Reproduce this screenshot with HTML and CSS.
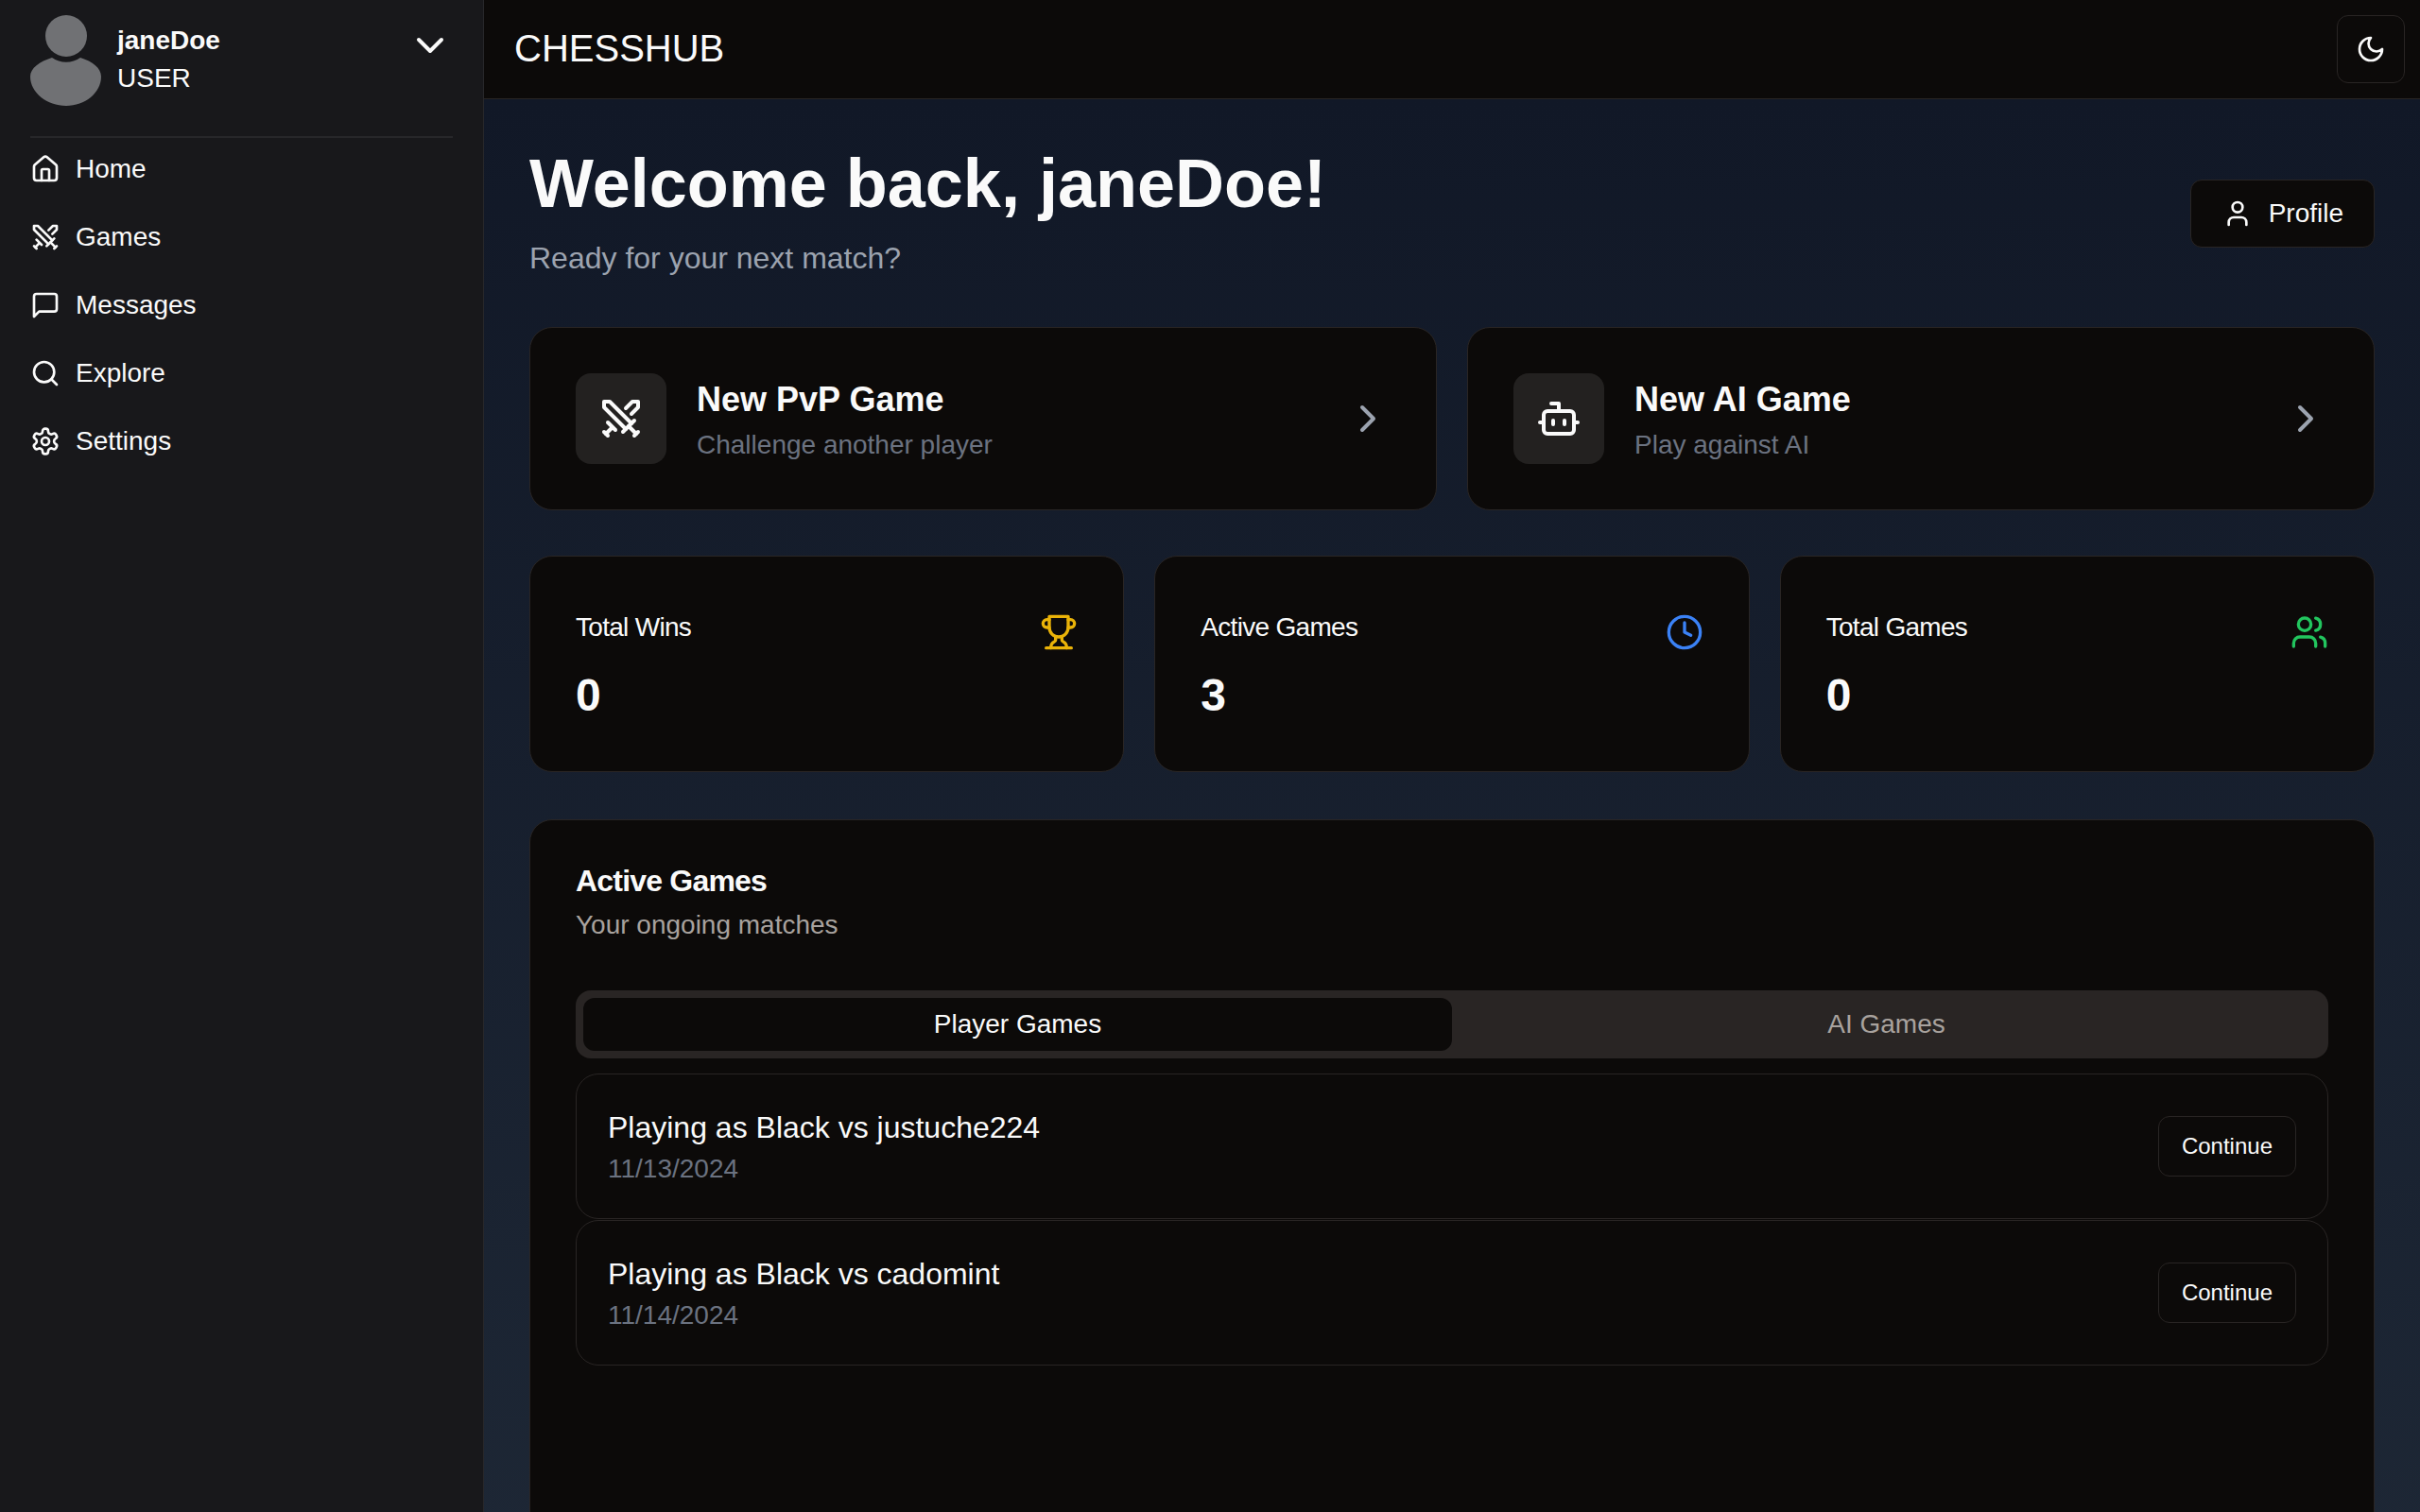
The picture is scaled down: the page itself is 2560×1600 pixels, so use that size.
FILE: index.html
```html
<!doctype html>
<html>
<head>
  <meta charset="utf-8">
  <title>ChessHub</title>
  <link rel="stylesheet" href="styles.css">
</head>
<body>
  <svg class="icon-defs" xmlns="http://www.w3.org/2000/svg">
    <symbol id="i-home" viewBox="0 0 24 24"><path d="M15 21v-8a1 1 0 0 0-1-1h-4a1 1 0 0 0-1 1v8"/><path d="M3 10a2 2 0 0 1 .709-1.528l7-5.999a2 2 0 0 1 2.582 0l7 5.999A2 2 0 0 1 21 10v9a2 2 0 0 1-2 2H5a2 2 0 0 1-2-2z"/></symbol>
    <symbol id="i-swords" viewBox="0 0 24 24"><polyline points="14.5 17.5 3 6 3 3 6 3 17.5 14.5"/><line x1="13" x2="19" y1="19" y2="13"/><line x1="16" x2="20" y1="16" y2="20"/><line x1="19" x2="21" y1="21" y2="19"/><polyline points="14.5 6.5 18 3 21 3 21 6 17.5 9.5"/><line x1="5" x2="9" y1="14" y2="18"/><line x1="7" x2="4" y1="17" y2="20"/><line x1="3" x2="5" y1="19" y2="21"/></symbol>
    <symbol id="i-message" viewBox="0 0 24 24"><path d="M21 15a2 2 0 0 1-2 2H7l-4 4V5a2 2 0 0 1 2-2h14a2 2 0 0 1 2 2z"/></symbol>
    <symbol id="i-search" viewBox="0 0 24 24"><circle cx="11" cy="11" r="8"/><path d="m21 21-4.3-4.3"/></symbol>
    <symbol id="i-settings" viewBox="0 0 24 24"><path d="M12.22 2h-.44a2 2 0 0 0-2 2v.18a2 2 0 0 1-1 1.73l-.43.25a2 2 0 0 1-2 0l-.15-.08a2 2 0 0 0-2.73.73l-.22.38a2 2 0 0 0 .73 2.73l.15.1a2 2 0 0 1 1 1.72v.51a2 2 0 0 1-1 1.74l-.15.09a2 2 0 0 0-.73 2.73l.22.38a2 2 0 0 0 2.73.73l.15-.08a2 2 0 0 1 2 0l.43.25a2 2 0 0 1 1 1.73V20a2 2 0 0 0 2 2h.44a2 2 0 0 0 2-2v-.18a2 2 0 0 1 1-1.73l.43-.25a2 2 0 0 1 2 0l.15.08a2 2 0 0 0 2.73-.73l.22-.39a2 2 0 0 0-.73-2.73l-.15-.08a2 2 0 0 1-1-1.74v-.5a2 2 0 0 1 1-1.74l.15-.09a2 2 0 0 0 .73-2.73l-.22-.38a2 2 0 0 0-2.73-.73l-.15.08a2 2 0 0 1-2 0l-.43-.25a2 2 0 0 1-1-1.73V4a2 2 0 0 0-2-2z"/><circle cx="12" cy="12" r="3"/></symbol>
    <symbol id="i-moon" viewBox="0 0 24 24"><path d="M12 3a6 6 0 0 0 9 9 9 9 0 1 1-9-9Z"/></symbol>
    <symbol id="i-user" viewBox="0 0 24 24"><path d="M19 21v-2a4 4 0 0 0-4-4H9a4 4 0 0 0-4 4v2"/><circle cx="12" cy="7" r="4"/></symbol>
    <symbol id="i-bot" viewBox="0 0 24 24"><path d="M12 8V4H8"/><rect width="16" height="12" x="4" y="8" rx="2"/><path d="M2 14h2"/><path d="M20 14h2"/><path d="M15 13v2"/><path d="M9 13v2"/></symbol>
    <symbol id="i-trophy" viewBox="0 0 24 24"><path d="M6 9H4.5a2.5 2.5 0 0 1 0-5H6"/><path d="M18 9h1.5a2.5 2.5 0 0 0 0-5H18"/><path d="M4 22h16"/><path d="M10 14.66V17c0 .55-.47.98-.97 1.21C7.85 18.75 7 20.24 7 22"/><path d="M14 14.66V17c0 .55.47.98.97 1.21C16.15 18.75 17 20.24 17 22"/><path d="M18 2H6v7a6 6 0 0 0 12 0V2Z"/></symbol>
    <symbol id="i-clock" viewBox="0 0 24 24"><circle cx="12" cy="12" r="10"/><polyline points="12 6 12 12 16 14"/></symbol>
    <symbol id="i-users" viewBox="0 0 24 24"><path d="M16 21v-2a4 4 0 0 0-4-4H6a4 4 0 0 0-4 4v2"/><circle cx="9" cy="7" r="4"/><path d="M22 21v-2a4 4 0 0 0-3-3.87"/><path d="M16 3.13a4 4 0 0 1 0 7.75"/></symbol>
    <symbol id="i-chevron-right" viewBox="0 0 24 24"><path d="m9 18 6-6-6-6"/></symbol>
    <symbol id="i-chevron-down" viewBox="0 0 24 24"><path d="m6 9 6 6 6-6"/></symbol>
  </svg>

  <div class="app">
    <aside class="sidebar">
      <div class="user-row">
        <svg class="avatar" viewBox="0 0 76 96">
          <circle cx="38" cy="22" r="22"/>
          <path d="M23 45 A26 26 0 0 0 53 45 C66 49 75 56 75 65 C75 82 58 96 38 96 C18 96 0 82 0 65 C0 56 10 49 23 45 Z"/>
        </svg>
        <div class="user-text">
          <div class="user-name">janeDoe</div>
          <div class="user-role">USER</div>
        </div>
        <svg class="icon icon-lg user-toggle"><use href="#i-chevron-down"/></svg>
      </div>
      <div class="divider"></div>
      <nav class="nav">
        <a class="nav-item"><svg class="icon"><use href="#i-home"/></svg>Home</a>
        <a class="nav-item"><svg class="icon"><use href="#i-swords"/></svg>Games</a>
        <a class="nav-item"><svg class="icon"><use href="#i-message"/></svg>Messages</a>
        <a class="nav-item"><svg class="icon"><use href="#i-search"/></svg>Explore</a>
        <a class="nav-item"><svg class="icon"><use href="#i-settings"/></svg>Settings</a>
      </nav>
    </aside>

    <div class="main">
      <header class="topbar">
        <div class="brand">CHESSHUB</div>
        <button class="theme-btn"><svg class="icon"><use href="#i-moon"/></svg></button>
      </header>

      <main class="content">
        <section class="welcome">
          <div>
            <h1 class="welcome-title">Welcome back, janeDoe!</h1>
            <p class="welcome-sub">Ready for your next match?</p>
          </div>
          <button class="profile-btn"><svg class="icon"><use href="#i-user"/></svg>Profile</button>
        </section>

        <section class="actions">
          <div class="card action-card">
            <div class="action-icon"><svg class="icon icon-lg"><use href="#i-swords"/></svg></div>
            <div class="action-text">
              <div class="action-title">New PvP Game</div>
              <div class="action-sub">Challenge another player</div>
            </div>
            <svg class="icon icon-lg action-arrow"><use href="#i-chevron-right"/></svg>
          </div>
          <div class="card action-card">
            <div class="action-icon"><svg class="icon icon-lg"><use href="#i-bot"/></svg></div>
            <div class="action-text">
              <div class="action-title">New AI Game</div>
              <div class="action-sub">Play against AI</div>
            </div>
            <svg class="icon icon-lg action-arrow"><use href="#i-chevron-right"/></svg>
          </div>
        </section>

        <section class="stats">
          <div class="card stat-card">
            <div class="stat-head">
              <div class="stat-label">Total Wins</div>
              <svg class="icon icon-md yellow"><use href="#i-trophy"/></svg>
            </div>
            <div class="stat-value">0</div>
          </div>
          <div class="card stat-card">
            <div class="stat-head">
              <div class="stat-label">Active Games</div>
              <svg class="icon icon-md blue"><use href="#i-clock"/></svg>
            </div>
            <div class="stat-value">3</div>
          </div>
          <div class="card stat-card">
            <div class="stat-head">
              <div class="stat-label">Total Games</div>
              <svg class="icon icon-md green"><use href="#i-users"/></svg>
            </div>
            <div class="stat-value">0</div>
          </div>
        </section>

        <section class="card games-panel">
          <h2 class="games-title">Active Games</h2>
          <p class="games-sub">Your ongoing matches</p>
          <div class="tabs">
            <div class="tab tab-active">Player Games</div>
            <div class="tab">AI Games</div>
          </div>
          <div class="game-row">
            <div>
              <div class="game-name">Playing as Black vs justuche224</div>
              <div class="game-date">11/13/2024</div>
            </div>
            <button class="continue-btn">Continue</button>
          </div>
          <div class="game-row">
            <div>
              <div class="game-name">Playing as Black vs cadomint</div>
              <div class="game-date">11/14/2024</div>
            </div>
            <button class="continue-btn">Continue</button>
          </div>
        </section>
      </main>
    </div>
  </div>
</body>
</html>
```

FILE: styles.css
```css
html, body {
  width: 100%;
  height: 100%;
  margin: 0;
  padding: 0;
  overflow: hidden;
  background: #0c0a09;
  color: #fafafa;
  font-family: "Liberation Sans", Arial, sans-serif;
}
h1, h2, p {
  margin: 0;
}
button {
  font-family: inherit;
  color: #fafafa;
  background: #0c0a09;
  border: 1px solid #292524;
}

.icon-defs {
  display: none;
}
.icon {
  flex: none;
  width: 32px;
  height: 32px;
  fill: none;
  stroke: currentColor;
  stroke-width: 2;
  stroke-linecap: round;
  stroke-linejoin: round;
}
.icon-md {
  width: 40px;
  height: 40px;
}
.icon-lg {
  width: 48px;
  height: 48px;
}
.yellow { color: #eab308; }
.blue { color: #3b82f6; }
.green { color: #22c55e; }

.app {
  display: flex;
  height: 100%;
}

/* sidebar */
.sidebar {
  flex: none;
  width: 512px;
  box-sizing: border-box;
  height: 100%;
  padding: 16px 32px 0;
  border-right: 1px solid #27272a;
  background: #18181b;
}
.user-row {
  display: flex;
  align-items: flex-start;
}
.avatar {
  flex: none;
  width: 76px;
  height: 96px;
  fill: #707174;
}
.user-text {
  flex: 1;
  margin: 7px 0 0 16px;
  font-size: 28px;
  line-height: 40px;
}
.user-name {
  font-weight: bold;
}
.user-toggle {
  margin-top: 8px;
}
.divider {
  height: 2px;
  margin-top: 32px;
  background: #27272a;
}
.nav {
  display: flex;
  flex-direction: column;
  gap: 8px;
  margin-top: 1px;
}
.nav-item {
  display: flex;
  align-items: center;
  gap: 16px;
  height: 64px;
  font-size: 28px;
}

/* top bar */
.main {
  flex: 1;
  display: flex;
  flex-direction: column;
  min-width: 0;
  height: 100%;
}
.topbar {
  flex: none;
  display: flex;
  align-items: center;
  justify-content: space-between;
  box-sizing: border-box;
  height: 105px;
  padding: 0 16px 1px 32px;
  border-bottom: 1px solid #292524;
  background: #0c0a09;
}
.brand {
  font-size: 40px;
}
.theme-btn {
  display: flex;
  align-items: center;
  justify-content: center;
  width: 72px;
  height: 72px;
  padding: 0;
  border-radius: 12px;
}

/* page content */
.content {
  flex: 1;
  min-height: 0;
  overflow: hidden;
  padding: 49px 48px 48px;
  background: linear-gradient(to bottom, #111827 0, #1f2937 1750px);
}
.welcome {
  display: flex;
  align-items: center;
  justify-content: space-between;
}
.welcome-title {
  font-size: 72px;
  line-height: 80px;
  font-weight: bold;
}
.welcome-sub {
  margin-top: 15px;
  font-size: 32px;
  line-height: 48px;
  color: #9ca3af;
}
.profile-btn {
  display: flex;
  align-items: center;
  gap: 17px;
  height: 72px;
  padding: 0 32px 0 33px;
  border-radius: 12px;
  font-size: 28px;
}

.card {
  box-sizing: border-box;
  border: 1px solid #292524;
  border-radius: 24px;
  background: #0c0a09;
}

.actions {
  display: grid;
  grid-template-columns: 1fr 1fr;
  gap: 32px;
  margin-top: 49px;
}
.action-card {
  display: flex;
  align-items: center;
  gap: 32px;
  padding: 48px;
}
.action-icon {
  flex: none;
  display: flex;
  align-items: center;
  justify-content: center;
  width: 96px;
  height: 96px;
  border-radius: 16px;
  background: #232120;
}
.action-text {
  flex: 1;
}
.action-title {
  font-size: 36px;
  line-height: 56px;
  font-weight: bold;
}
.action-sub {
  font-size: 28px;
  line-height: 40px;
  color: #6b7280;
}
.action-arrow {
  color: #9ca3af;
}

.stats {
  display: grid;
  grid-template-columns: repeat(3, 1fr);
  gap: 32px;
  margin-top: 48px;
}
.stat-card {
  padding: 48px;
}
.stat-head {
  display: flex;
  justify-content: space-between;
  height: 60px;
  padding-top: 7px;
}
.stat-head .icon {
  margin-top: 5px;
}
.stat-label {
  font-size: 28px;
  line-height: 40px;
  letter-spacing: -0.7px;
}
.stat-value {
  font-size: 48px;
  line-height: 64px;
  font-weight: bold;
}

.games-panel {
  min-height: 900px;
  margin-top: 50px;
  padding: 48px;
}
.games-title {
  font-size: 32px;
  line-height: 32px;
  font-weight: bold;
  letter-spacing: -0.8px;
}
.games-sub {
  margin-top: 11px;
  font-size: 28px;
  line-height: 40px;
  color: #a8a29e;
}
.tabs {
  display: grid;
  grid-template-columns: 1fr 1fr;
  height: 72px;
  box-sizing: border-box;
  margin-top: 49px;
  padding: 8px;
  border-radius: 16px;
  background: #292524;
}
.tab {
  display: flex;
  align-items: center;
  justify-content: center;
  border-radius: 12px;
  font-size: 28px;
  color: #a8a29e;
}
.tab-active {
  background: #0c0a09;
  color: #fafafa;
}
.tabs + .game-row {
  margin-top: 16px;
}
.game-row + .game-row {
  margin-top: 1px;
}
.game-row {
  display: flex;
  align-items: center;
  justify-content: space-between;
  padding: 32px 33px;
  border: 1px solid #292524;
  border-radius: 24px;
}
.game-name {
  font-size: 32px;
  line-height: 48px;
}
.game-date {
  font-size: 28px;
  line-height: 40px;
  color: #6b7280;
}
.continue-btn {
  height: 64px;
  padding: 0 24px;
  border-radius: 12px;
  font-size: 24px;
}
```
